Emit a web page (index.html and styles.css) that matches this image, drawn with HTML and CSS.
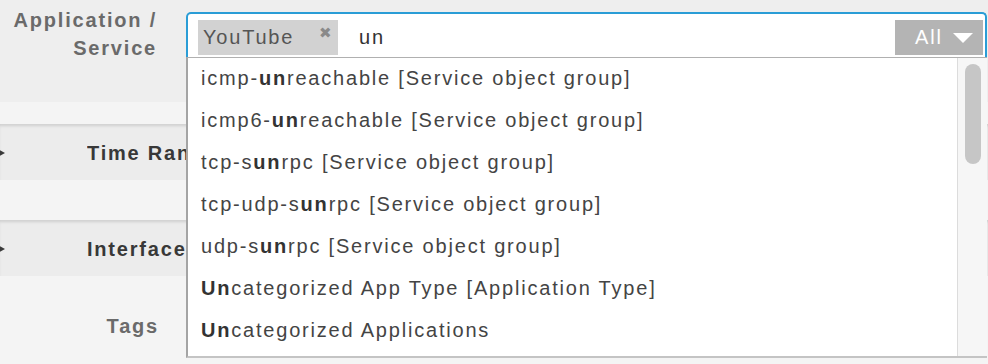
FILE: index.html
```html
<!DOCTYPE html>
<html lang="en">
<head>
    <meta charset="UTF-8">
    <title>Rule editor</title>
    <link rel="stylesheet" href="styles.css">
</head>
<body>
    <div class="form">
        <div class="field-row top">
            <label class="field-label">Application /<br>Service</label>
            <div class="picker">
                <div class="picker-box">
                    <span class="chip">YouTube <span class="chip-x">&#10006;</span></span>
                    <span class="query">un</span>
                    <span class="scope">All <span class="caret"></span></span>
                </div>
                <div class="menu">
                    <ul class="menu-list">
                        <li>icmp-<b>un</b>reachable [Service object group]</li>
                        <li>icmp6-<b>un</b>reachable [Service object group]</li>
                        <li>tcp-s<b>un</b>rpc [Service object group]</li>
                        <li>tcp-udp-s<b>un</b>rpc [Service object group]</li>
                        <li>udp-s<b>un</b>rpc [Service object group]</li>
                        <li><b>Un</b>categorized App Type [Application Type]</li>
                        <li><b>Un</b>categorized Applications</li>
                    </ul>
                    <div class="menu-scroll"><div class="menu-thumb"></div></div>
                </div>
            </div>
        </div>

        <div class="gap small"></div>
        <div class="section"><span class="arrow"></span><span class="section-title">Time Range</span></div>
        <div class="gap"></div>
        <div class="section"><span class="arrow"></span><span class="section-title">Interface</span></div>

        <div class="field-row tags">
            <label class="field-label">Tags</label>
        </div>
    </div>
</body>
</html>
```

FILE: styles.css
```css
html, body {
    margin: 0;
    height: 364px;
    overflow: hidden;
}

body {
    font-family: 'Liberation Sans', Arial, sans-serif;
    letter-spacing: 1.8px;
    background-color: #f4f4f4;
    color: #444;
}

.form {
    width: 988px;
}

.field-row {
    display: flex;
    align-items: flex-start;
}

.field-row.top {
    height: 102px;
    background-color: #eeeeee;
}

.field-label {
    width: 159px;
    flex-shrink: 0;
    text-align: right;
    font-size: 20px;
    font-weight: bold;
    line-height: 28px;
    color: #6a6a6a;
}

.top .field-label {
    padding-top: 6px;
    width: 157px;
}

.picker {
    position: relative;
    margin-left: 29px;
    margin-top: 12px;
    width: 801px;
}

.picker-box {
    display: flex;
    align-items: center;
    height: 45px;
    box-sizing: border-box;
    padding: 4px 2px 0 10px;
    background-color: #fff;
    border: 2px solid #2a9dd6;
    border-bottom: none;
    border-radius: 5px 5px 0 0;
    font-size: 20px;
}

.chip {
    display: flex;
    align-items: center;
    height: 35px;
    width: 140px;
    box-sizing: border-box;
    padding-left: 5px;
    background-color: #d2d2d2;
    color: #555;
}

.chip-x {
    font-size: 15px;
    letter-spacing: 0;
    color: #8a8a8a;
    margin-left: auto;
    margin-right: 6px;
    margin-top: -10px;
}

.query {
    margin-left: 21px;
    color: #333;
}

.scope {
    margin-left: auto;
    display: flex;
    align-items: center;
    height: 35px;
    width: 88px;
    box-sizing: border-box;
    padding-left: 20px;
    background-color: #b4b4b4;
    color: #fff;
}

.caret {
    margin-left: 10px;
    border-left: 10px solid transparent;
    border-right: 10px solid transparent;
    border-top: 10px solid #fff;
}

.menu {
    position: absolute;
    left: 0;
    top: 45px;
    width: 801px;
    height: 301px;
    display: flex;
    overflow: hidden;
    background-color: #fff;
    border-left: 2px solid #a4a4a4;
    border-top: 1px solid #b0b0b0;
    border-bottom: 2px solid #c4c4c4;
    box-sizing: border-box;
    z-index: 2;
}

.menu-list {
    list-style: none;
    margin: 0;
    padding: 0;
    flex: 1;
}

.menu-list li {
    height: 42px;
    line-height: 40px;
    padding-left: 13px;
    font-size: 20px;
    color: #444;
    white-space: nowrap;
}

.menu-list b {
    color: #333;
}

.menu-scroll {
    width: 29px;
    background-color: #f6f6f6;
    border-left: 1px solid #dcdcdc;
    padding-top: 6px;
}

.menu-thumb {
    width: 16px;
    height: 100px;
    margin-left: 7px;
    border-radius: 8px;
    background-color: #c6c6c6;
}

.gap {
    height: 40px;
    background-color: #f4f4f4;
}

.gap.small {
    height: 22px;
}

.section {
    display: flex;
    align-items: center;
    height: 56px;
    box-sizing: border-box;
    padding-top: 2px;
    background-color: #ececec;
    box-shadow: inset 0 3px 3px -1px rgba(0, 0, 0, 0.12);
}

.arrow {
    margin-left: -4px;
    border-top: 5px solid transparent;
    border-bottom: 5px solid transparent;
    border-left: 9px solid #3a3a3a;
}

/* the open menu covers the rest of the header text */
.section-title {
    margin-left: 82px;
    width: 99px;
    overflow: hidden;
    white-space: nowrap;
    font-size: 20px;
    font-weight: bold;
    color: #383838;
}

.field-row.tags {
    padding-top: 36px;
}
```
